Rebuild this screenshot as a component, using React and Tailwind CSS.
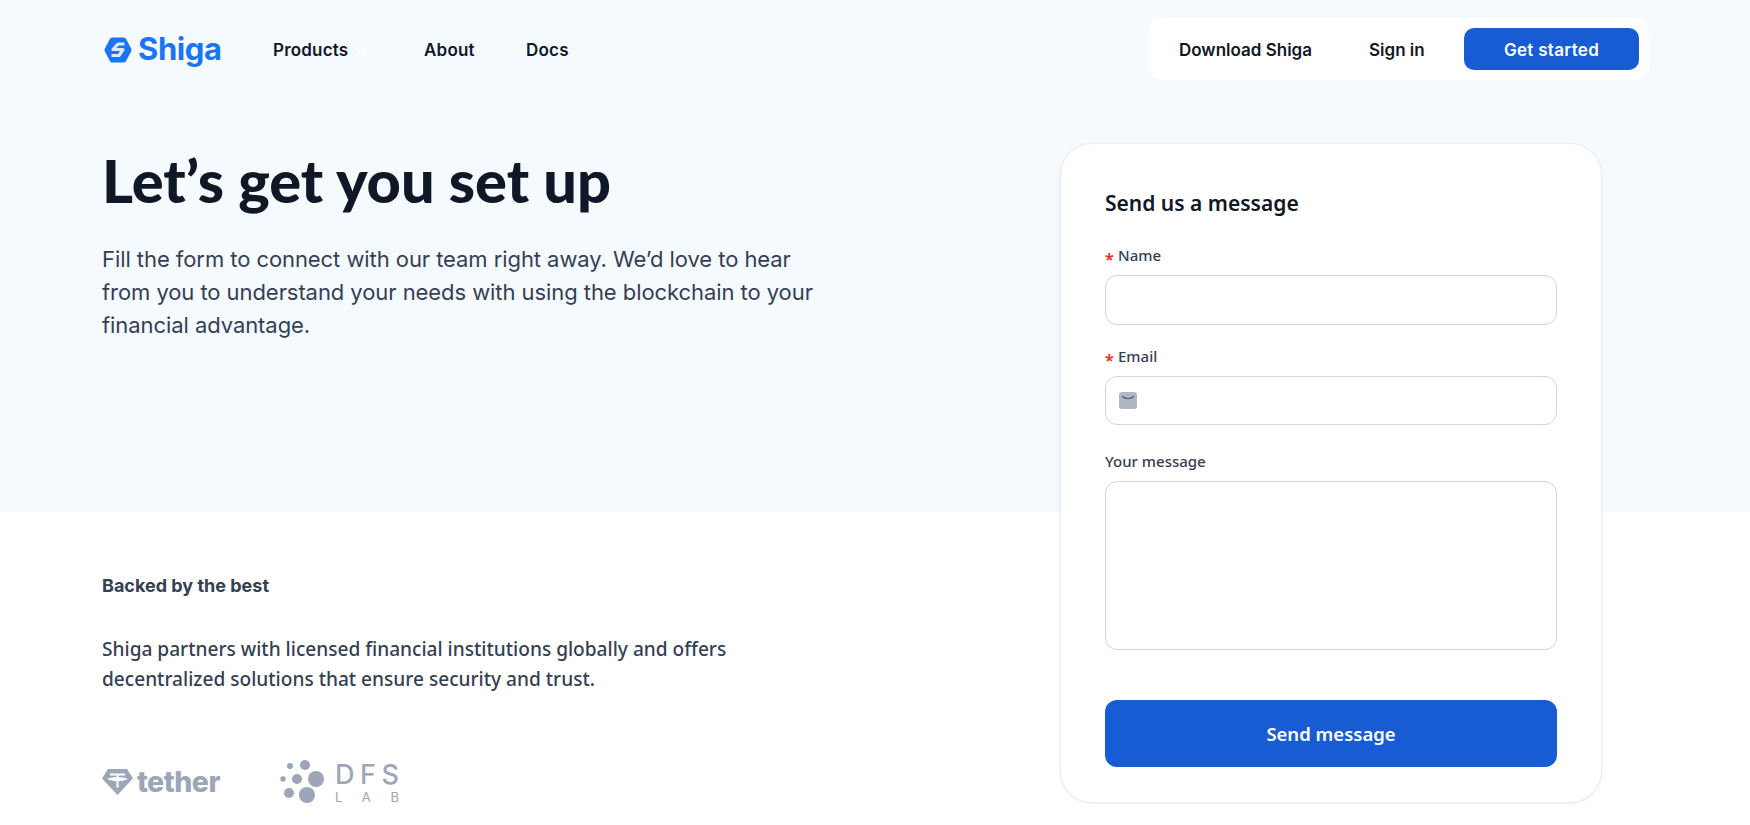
import React from "react";

const dm = "font-['Inter','Liberation_Sans',sans-serif]";
const lato = "font-['Lato','Inter',sans-serif]";
const plex = "font-['Noto_Sans','Liberation_Sans',sans-serif]";

function Logo() {
  return (
    <div className="flex items-center gap-[6px] w-[118px]">
      <svg width="28" height="26" viewBox="0 0 28 26">
        <path d="M8.500 0.500h11a3 3 0 0 1 2.600 1.500l5 9.500a3 3 0 0 1 0 3l-5 9.500a3 3 0 0 1-2.600 1.500h-11a3 3 0 0 1-2.600-1.500l-5-9.500a3 3 0 0 1 0-3l5-9.500a3 3 0 0 1 2.600-1.500z" fill="#1a75f5" />
        <path d="M20.500 7h-6.500l-5 5.500h10l-4 6H7.500" fill="none" stroke="#dbe9fd" strokeWidth="3.200" strokeLinejoin="round" />
      </svg>
      <span className={`${dm} text-[31px] leading-none font-bold text-[#1a75f5] tracking-[-0.4px] pb-[3px]`}>Shiga</span>
    </div>
  );
}

function Field({ label, required, h, icon, extra = "", gap = "mt-[9px]" }) {
  return (
    <div className={extra}>
      <label className={`${plex} flex items-center h-[20px] text-[15px] font-medium text-[#344054] ${required ? "pb-[2px]" : ""}`}>
        {required && <span className="relative top-[4px] text-[#e5332a] text-[16px] font-bold w-[13px] leading-none">*</span>}
        {label}
      </label>
      <div className={`${gap} ${h} rounded-[12px] border border-[#d0d5dd] bg-white flex items-center pl-[13px]`}>
        {icon && (
          <svg width="18" height="17" viewBox="0 0 18 17">
            <rect width="18" height="17" rx="3" fill="#b1b7c2" />
            <path d="M3.500 4.500c3.300 2.800 7.700 2.800 11 0" fill="none" stroke="#475467" strokeWidth="1.300" strokeLinecap="round" />
          </svg>
        )}
      </div>
    </div>
  );
}

function Tether() {
  return (
    <div className="flex items-center gap-[4px]">
      <svg width="31" height="26" viewBox="0 0 31 26">
        <path d="M6 0h19l6 9.500L15.500 26 0 9.500z" fill="#9ca6b8" />
        <path d="M8 5.500h15M15.500 5.500v13M8 10c4-1.500 11-1.500 15 0-4 1.500-11 1.500-15 0z" fill="none" stroke="#fff" strokeWidth="2" />
      </svg>
      <span className={`${dm} text-[28.500px] leading-none font-extrabold text-[#9ca6b8] tracking-[-0.5px]`}>tether</span>
    </div>
  );
}

function Dfs() {
  return (
    <div className="flex items-center gap-[11px]">
      <svg width="44" height="44" viewBox="0 0 44 44" fill="#9ca6b8">
        <circle cx="10" cy="6" r="3" />
        <circle cx="25" cy="5" r="5" />
        <circle cx="3" cy="19" r="2.700" />
        <circle cx="17" cy="19" r="5" />
        <circle cx="36" cy="19" r="8" />
        <circle cx="9" cy="33" r="5" />
        <circle cx="27" cy="35" r="8" />
      </svg>
      <div className={`${dm} text-[#9ca6b8] w-[64px]`}>
        <div className="text-[27px] leading-[27px] font-medium flex justify-between"><span>D</span><span>F</span><span>S</span></div>
        <div className="text-[13px] leading-[14px] mt-[2px] flex justify-between"><span>L</span><span>A</span><span>B</span></div>
      </div>
    </div>
  );
}

export default function App() {
  return (
    <div className="h-[825px] overflow-hidden bg-[linear-gradient(#f5faff_512px,#ffffff_512px)]">
      <header className="flex items-center h-[100px] pl-[104px] pr-[101px]">
        <Logo />
        <nav className={`${dm} flex items-center text-[17px] font-semibold text-[#101828] ml-[51px] pt-[2px] tracking-[0.2px]`}>
          <a className="flex items-center w-[151px]">
            Products
            <svg className="ml-[7px]" width="12" height="8" viewBox="0 0 12 8"><path d="M1 1.500l5 5 5-5" fill="none" stroke="#ffffff" strokeWidth="1.500" /></svg>
          </a>
          <a className="w-[102px]">About</a>
          <a>Docs</a>
        </nav>
        <div className={`${dm} ml-auto mb-[3px] flex items-center h-[62px] w-[500px] rounded-[12px] bg-white pl-[30px] pr-[10px] text-[17px] font-semibold text-[#101828]`}>
          <a className="w-[190px] pt-[5px]">Download Shiga</a>
          <a className="pt-[5px]">Sign in</a>
          <a className="ml-auto flex items-center justify-center w-[175px] h-[42px] pt-[5px] rounded-[10px] bg-[#175cd3] text-white tracking-[0.3px]">Get started</a>
        </div>
      </header>

      <main className="flex pl-[102px] pt-[43px]">
        <section className="w-[958px]">
          <h1 className={`${lato} text-[59.500px] leading-[72px] font-black text-[#101828] mt-[1px]`}>Let’s get you set up</h1>
          <p className={`${dm} mt-[27px] w-[740px] text-[22px] leading-[33px] text-[#344054] tracking-[-0.067px]`}>
            Fill the form to connect with our team right away. We’d love to hear from you to understand your needs with using the blockchain to your financial advantage.
          </p>
          <h2 className={`${dm} mt-[232px] text-[18px] leading-[24px] font-bold text-[#344054]`}>Backed by the best</h2>
          <p className={`${plex} mt-[36px] w-[680px] text-[19.100px] leading-[30px] font-medium text-[#344054]`}>
            Shiga partners with licensed financial institutions globally and offers decentralized solutions that ensure security and trust.
          </p>
          <div className="mt-[66px] flex items-center gap-[60px]">
            <Tether />
            <Dfs />
          </div>
        </section>
        <section className="w-[542px] h-[660px] rounded-[32px] border border-[#eaecf0] bg-white shadow-[0_1px_3px_rgba(16,24,40,0.06)] px-[44px] pt-[45px]">
          <h3 className={`${plex} text-[21px] leading-[28px] font-semibold text-[#101828]`}>Send us a message</h3>
          <div className="mt-[29px] flex flex-col gap-[22px]">
            <Field label="Name" required h="h-[50px]" />
            <Field label="Email" required h="h-[49px]" icon />
            <Field label="Your message" h="h-[169px]" extra="mt-[4px]" gap="mt-[10px]" />
          </div>
          <button className={`${plex} mt-[50px] w-full h-[67px] rounded-[12px] bg-[#175cd3] text-white text-[18.500px] font-semibold`}>Send message</button>
        </section>
      </main>
    </div>
  );
}
